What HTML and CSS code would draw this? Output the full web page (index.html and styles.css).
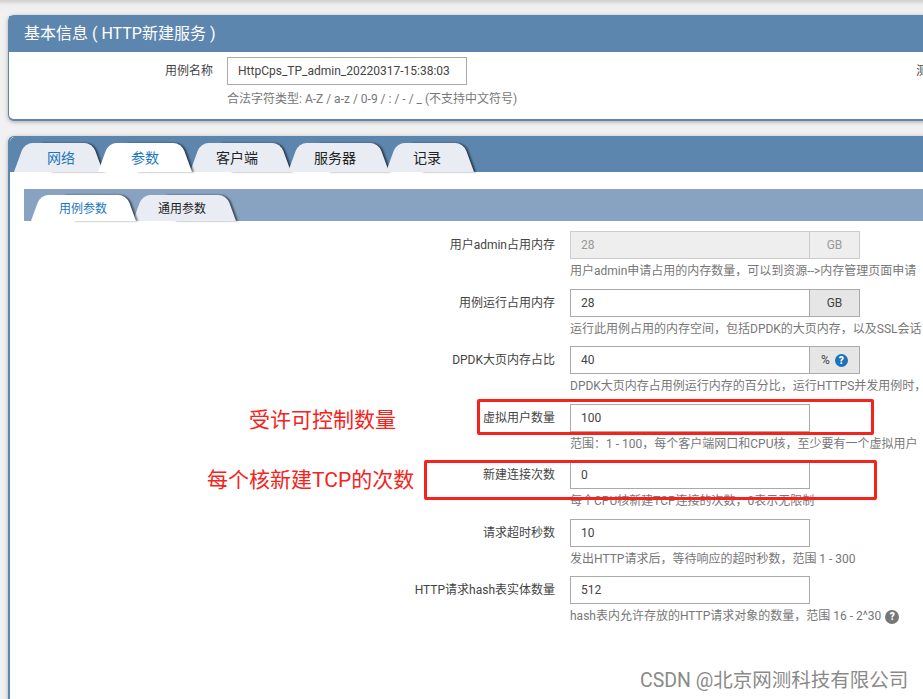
FILE: index.html
```html
<!DOCTYPE html>
<html>
<head>
  <title>基本信息</title>
  <link rel="stylesheet" href="styles.css">
</head>
<body>
  <div class="container">
    <!-- Basic info -->
    <section class="panel info-panel">
      <h2 class="panel-title">基本信息 ( HTTP新建服务 )</h2>
      <div class="name-row">
        <label class="name-label">用例名称</label>
        <div>
          <input class="name-input" type="text" value="HttpCps_TP_admin_20220317-15:38:03">
          <p class="help">合法字符类型: A-Z / a-z / 0-9 / : / - / _ (不支持中文符号)</p>
        </div>
        <label class="side-label">测试</label>
      </div>
    </section>

    <!-- Tabs -->
    <section class="panel tabs-panel">
      <nav class="tabs">
        <a class="tab tab-link">网络</a>
        <a class="tab tab-active">参数</a>
        <a class="tab">客户端</a>
        <a class="tab">服务器</a>
        <a class="tab">记录</a>
      </nav>
      <div class="tab-body">
        <nav class="tabs subtabs">
          <a class="tab tab-active">用例参数</a>
          <a class="tab">通用参数</a>
        </nav>

        <div class="row">
          <label class="row-label">用户admin占用内存</label>
          <div class="field">
            <div class="control">
              <input class="num-input" type="text" value="28" disabled>
              <span class="addon addon-disabled">GB</span>
            </div>
            <p class="help">用户admin申请占用的内存数量，可以到资源--&gt;内存管理页面申请</p>
          </div>
        </div>

        <div class="row">
          <label class="row-label">用例运行占用内存</label>
          <div class="field">
            <div class="control">
              <input class="num-input" type="text" value="28">
              <span class="addon">GB</span>
            </div>
            <p class="help">运行此用例占用的内存空间，包括DPDK的大页内存，以及SSL会话</p>
          </div>
        </div>

        <div class="row">
          <label class="row-label">DPDK大页内存占比</label>
          <div class="field">
            <div class="control">
              <input class="num-input" type="text" value="40">
              <span class="addon">% <i class="q-icon q-blue">?</i></span>
            </div>
            <p class="help">DPDK大页内存占用例运行内存的百分比，运行HTTPS并发用例时，</p>
          </div>
        </div>

        <div class="row">
          <label class="row-label">虚拟用户数量</label>
          <div class="field">
            <div class="control">
              <input class="num-input" type="text" value="100">
            </div>
            <p class="help">范围：1 - 100，每个客户端网口和CPU核，至少要有一个虚拟用户</p>
          </div>
        </div>

        <div class="row">
          <label class="row-label">新建连接次数</label>
          <div class="field">
            <div class="control">
              <input class="num-input" type="text" value="0">
            </div>
            <p class="help">每个CPU核新建TCP连接的次数，0表示无限制</p>
          </div>
        </div>

        <div class="row">
          <label class="row-label">请求超时秒数</label>
          <div class="field">
            <div class="control">
              <input class="num-input" type="text" value="10">
            </div>
            <p class="help">发出HTTP请求后，等待响应的超时秒数，范围 1 - 300</p>
          </div>
        </div>

        <div class="row">
          <label class="row-label">HTTP请求hash表实体数量</label>
          <div class="field">
            <div class="control">
              <input class="num-input" type="text" value="512">
            </div>
            <p class="help">hash表内允许存放的HTTP请求对象的数量，范围 16 - 2^30 <i class="q-icon q-gray">?</i></p>
          </div>
        </div>
      </div>
    </section>
  </div>

  <!-- Red notes drawn over the screenshot -->
  <div class="mark mark-users"></div>
  <div class="mark mark-conn"></div>
  <div class="note note-users">受许可控制数量</div>
  <div class="note note-conn">每个核新建TCP的次数</div>
  <div class="watermark">CSDN @北京网测科技有限公司</div>
</body>
</html>
```

FILE: styles.css
```css
* {
  box-sizing: border-box;
  font-family: Roboto, "Noto Sans CJK SC", sans-serif;
}

html, body {
  height: 699px;
  overflow: hidden;
}

body {
  margin: 0;
  background: linear-gradient(#cfcfcf, #eeeeee 5px, #f1f1f1 14px);
  color: #444;
  font-size: 12px;
}

.container {
  width: 1400px;
  padding: 15px 0 0 8px;
}

.panel {
  background-color: #fff;
  border: 1px solid #5d86ae;
  border-radius: 6px;
  box-shadow: 0 1px 4px rgba(0, 0, 0, 0.3);
}

.info-panel {
  height: 106px;
  border-bottom-width: 2px;
  margin-bottom: 15px;
}

.panel-title {
  margin: 0;
  height: 36px;
  padding-left: 15px;
  background-color: #5d86ae;
  color: #fff;
  font-size: 16px;
  font-weight: 400;
  line-height: 36px;
}

.name-row {
  display: flex;
  padding-top: 5px;
  white-space: nowrap;
}

.name-label {
  width: 204px;
  text-align: right;
  line-height: 28px;
}

.name-input {
  display: block;
  width: 240px;
  height: 28px;
  margin-left: 14px;
  padding: 0 10px;
  border: 1px solid #aaa;
  color: #444;
  font-size: 12px;
  outline: none;
}

.name-row .help {
  margin-left: 14px;
  margin-top: 6px;
}

.side-label {
  margin-left: 399px;
  line-height: 28px;
}

.tabs-panel {
  height: 620px;
  border-left-width: 2px;
}

.tabs {
  display: flex;
  height: 35px;
  padding: 6px 0 0 4px;
  background-color: #5d86ae;
  border-radius: 5px 5px 0 0;
}

.tab {
  position: relative;
  z-index: 1;
  height: 29px;
  margin-right: -3px;
  padding: 0 33px 0 26px;
  color: #222;
  font-size: 14px;
  line-height: 31px;
  cursor: pointer;
}

.tab::before,
.tab::after {
  content: "";
  position: absolute;
  top: 0;
  bottom: 0;
  width: 60%;
  z-index: -1;
  background-color: #e9edf3;
}

.tab::before {
  left: 0;
  border-radius: 8px 0 0 0;
  transform-origin: bottom left;
  transform: skewX(-20deg);
}

.tab::after {
  right: 0;
  border-radius: 0 8px 0 0;
  transform-origin: bottom right;
  transform: skewX(20deg);
  box-shadow: 2px 0 2px rgba(0, 0, 0, 0.55);
}

.tab:nth-child(1) {
  margin-right: -5px;
  padding: 0 28px 0 33px;
}

.tab:nth-child(2) {
  margin-right: -2px;
  padding: 0 33px;
}

.tab:nth-child(5) {
  padding-left: 27px;
}

.tab-link,
.tab-active {
  color: #1b76c0;
}

.tab.tab-active {
  z-index: 2;
}

.tab-active::before,
.tab-active::after {
  background-color: #fff;
}

.tab-body {
  padding: 17px 0 0 14px;
}

.subtabs {
  height: 32px;
  padding: 6px 0 0 7px;
  margin-bottom: 10px;
  background-color: #87a3c1;
  border-radius: 0;
}

.subtabs .tab {
  height: 26px;
  font-size: 12px;
  line-height: 28px;
}

.subtabs .tab:nth-child(1) {
  margin-right: -3px;
  padding: 0 29px 0 28px;
}

.subtabs .tab:nth-child(2) {
  padding: 0 30px 0 25px;
}

.row {
  display: flex;
  height: 57.5px;
  white-space: nowrap;
}

.row-label {
  width: 531px;
  text-align: right;
  line-height: 28px;
}

.field {
  margin-left: 15px;
}

.control {
  display: flex;
  height: 28px;
}

.num-input {
  width: 240px;
  height: 28px;
  padding: 0 10px;
  border: 1px solid #aaa;
  color: #444;
  font-size: 12px;
  outline: none;
}

.num-input:disabled {
  background-color: #eee;
  border-color: #ccc;
  color: #999;
}

.addon {
  display: flex;
  align-items: center;
  justify-content: center;
  gap: 5px;
  width: 50px;
  background-color: #e6e6e6;
  border: 1px solid #aaa;
  border-left: none;
  color: #444;
}

.addon-disabled {
  background-color: #eee;
  border-color: #ccc;
  color: #999;
}

.help {
  margin: 4px 0 0;
  color: #777;
  font-size: 12px;
  line-height: 17px;
}

.q-icon {
  display: inline-block;
  width: 13px;
  height: 13px;
  border-radius: 50%;
  color: #fff;
  font-size: 10px;
  font-style: normal;
  font-weight: 900;
  line-height: 13px;
  text-align: center;
  vertical-align: -1px;
}

.q-blue {
  background-color: #1a73b8;
}

.q-gray {
  width: 14px;
  height: 14px;
  margin-left: 1px;
  background-color: #777;
  line-height: 14px;
  vertical-align: 0;
}

.mark {
  position: absolute;
  border: 3px solid #f5231b;
  border-radius: 2px;
}

.mark-users {
  left: 477px;
  top: 399px;
  width: 397px;
  height: 36px;
}

.mark-conn {
  left: 424px;
  top: 460px;
  width: 453px;
  height: 40px;
}

.note {
  position: absolute;
  color: #f5231b;
  font-size: 21px;
  line-height: 28px;
  white-space: nowrap;
}

.note-users {
  left: 249px;
  top: 406px;
}

.note-conn {
  left: 207px;
  top: 466px;
}

.watermark {
  position: absolute;
  left: 640px;
  top: 668px;
  color: #8a8a8a;
  font-size: 19.5px;
  line-height: 26px;
  white-space: nowrap;
}
```
